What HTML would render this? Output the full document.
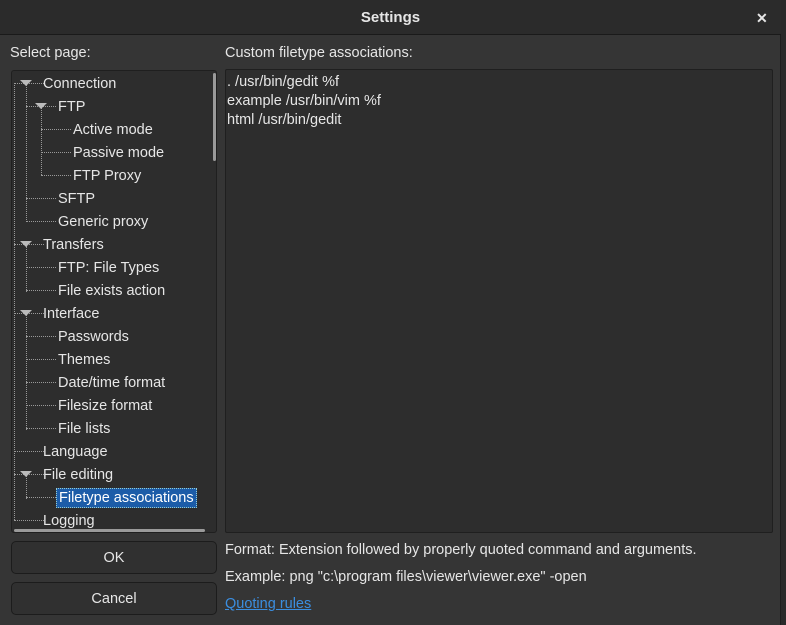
<!DOCTYPE html>
<html><head><style>
*{margin:0;padding:0;box-sizing:border-box}
body{width:786px;height:625px;background:#2a2a2a;font-family:"Liberation Sans",sans-serif;font-size:14.5px;color:#e6e6e6;position:relative;overflow:hidden}
.a{position:absolute;white-space:nowrap}
.dlg{position:absolute;left:0;top:0;width:781px;height:625px;background:#353535;border-right:1px solid #1e1e1e}
.title{position:absolute;left:0;top:0;width:781px;height:35px;background:#2b2b2b;border-bottom:1px solid #1a1a1a;text-align:center;line-height:36px;font-weight:bold;font-size:15px}
.tree{position:absolute;left:11px;top:70px;width:206px;height:463px;background:#2d2d2d;border:1px solid #1f1f1f;border-radius:3px;overflow:hidden}
.tree .a{margin-top:2px}
.txt{position:absolute;left:225px;top:69px;width:548px;height:464px;background:#2d2d2d;border:1px solid #1f1f1f;border-radius:2px}
.btn{position:absolute;left:11px;width:206px;height:33px;background:#303030;border:1px solid #1c1c1c;border-radius:5px;text-align:center;line-height:33px}
.vl{position:absolute;border-left:1px dotted #999}
.hl{position:absolute;border-top:1px dotted #999;height:0}
.tri{position:absolute;width:0;height:0;border-left:6px solid transparent;border-right:6px solid transparent;border-top:6px solid #bbb}
</style></head><body>
<div class="dlg">
<div class="title">Settings</div>
<div class="a" style="left:756px;top:10px;font-size:14px;font-weight:bold">✕</div>
<div class="a" style="left:10px;top:45px">Select page:</div>
<div class="a" style="left:225px;top:45px">Custom filetype associations:</div>
<div class="tree">
<div class="vl" style="left:2px;top:12px;height:437px"></div>
<div class="vl" style="left:14px;top:12px;height:139px"></div>
<div class="vl" style="left:29px;top:35px;height:69px"></div>
<div class="vl" style="left:14px;top:175px;height:46px"></div>
<div class="vl" style="left:14px;top:244px;height:115px"></div>
<div class="vl" style="left:14px;top:405px;height:23px"></div>
<div class="hl" style="left:2px;top:12px;width:30px"></div>
<div class="hl" style="left:14px;top:35px;width:30px"></div>
<div class="hl" style="left:29px;top:58px;width:30px"></div>
<div class="hl" style="left:29px;top:81px;width:30px"></div>
<div class="hl" style="left:29px;top:104px;width:30px"></div>
<div class="hl" style="left:14px;top:127px;width:30px"></div>
<div class="hl" style="left:14px;top:150px;width:30px"></div>
<div class="hl" style="left:2px;top:173px;width:30px"></div>
<div class="hl" style="left:14px;top:196px;width:30px"></div>
<div class="hl" style="left:14px;top:219px;width:30px"></div>
<div class="hl" style="left:2px;top:242px;width:30px"></div>
<div class="hl" style="left:14px;top:265px;width:30px"></div>
<div class="hl" style="left:14px;top:288px;width:30px"></div>
<div class="hl" style="left:14px;top:311px;width:30px"></div>
<div class="hl" style="left:14px;top:334px;width:30px"></div>
<div class="hl" style="left:14px;top:357px;width:30px"></div>
<div class="hl" style="left:2px;top:380px;width:30px"></div>
<div class="hl" style="left:2px;top:403px;width:30px"></div>
<div class="hl" style="left:14px;top:426px;width:30px"></div>
<div class="hl" style="left:2px;top:449px;width:30px"></div>
<div class="tri" style="left:8px;top:9px"></div>
<div class="tri" style="left:23px;top:32px"></div>
<div class="tri" style="left:8px;top:170px"></div>
<div class="tri" style="left:8px;top:239px"></div>
<div class="tri" style="left:8px;top:400px"></div>
<div class="a" style="left:31px;top:3px">Connection</div>
<div class="a" style="left:46px;top:26px">FTP</div>
<div class="a" style="left:61px;top:49px">Active mode</div>
<div class="a" style="left:61px;top:72px">Passive mode</div>
<div class="a" style="left:61px;top:95px">FTP Proxy</div>
<div class="a" style="left:46px;top:118px">SFTP</div>
<div class="a" style="left:46px;top:141px">Generic proxy</div>
<div class="a" style="left:31px;top:164px">Transfers</div>
<div class="a" style="left:46px;top:187px">FTP: File Types</div>
<div class="a" style="left:46px;top:210px">File exists action</div>
<div class="a" style="left:31px;top:233px">Interface</div>
<div class="a" style="left:46px;top:256px">Passwords</div>
<div class="a" style="left:46px;top:279px">Themes</div>
<div class="a" style="left:46px;top:302px">Date/time format</div>
<div class="a" style="left:46px;top:325px">Filesize format</div>
<div class="a" style="left:46px;top:348px">File lists</div>
<div class="a" style="left:31px;top:371px">Language</div>
<div class="a" style="left:31px;top:394px">File editing</div>
<div class="a" style="left:44px;top:415px;background:#1c5ca8;border:1px dotted #9cc;padding:1px 2px;color:#fff">Filetype associations</div>
<div class="a" style="left:31px;top:440px">Logging</div>
<div style="position:absolute;left:201px;top:2px;width:3px;height:88px;background:#9a9a9a;border-radius:2px"></div>
<div style="position:absolute;left:2px;top:458px;width:191px;height:3px;background:#9a9a9a;border-radius:2px"></div>
</div>
<div class="txt">
<div class="a" style="left:1px;top:3px;line-height:19px">. /usr/bin/gedit %f<br>example /usr/bin/vim %f<br>html /usr/bin/gedit</div>
</div>
<div class="btn" style="top:541px">OK</div>
<div class="btn" style="top:582px">Cancel</div>
<div class="a" style="left:225px;top:542px">Format: Extension followed by properly quoted command and arguments.</div>
<div class="a" style="left:225px;top:569px">Example: png "c:\program files\viewer\viewer.exe" -open</div>
<div class="a" style="left:225px;top:596px;color:#3b8ee0;text-decoration:underline">Quoting rules</div>
</div>
</body></html>
